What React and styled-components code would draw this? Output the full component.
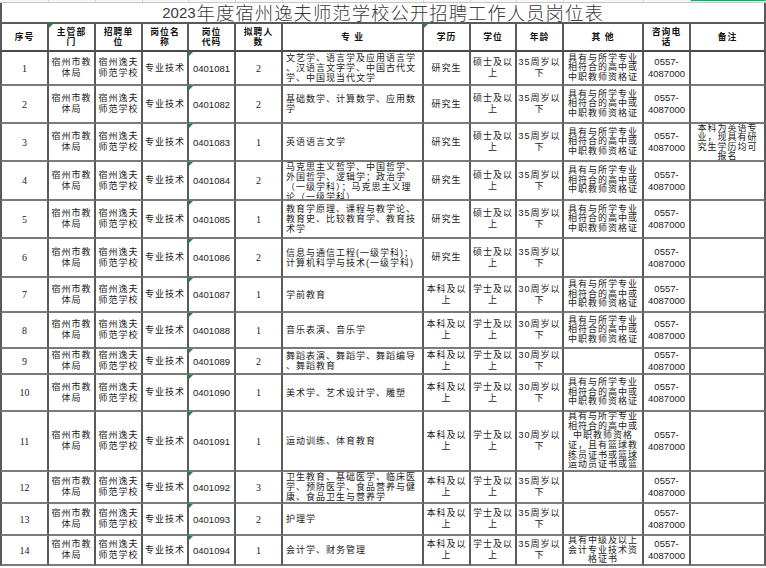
import React from 'react';
import styled, { createGlobalStyle } from 'styled-components';

const COLS = [49, 47, 47, 46, 47, 47, 141, 47, 46, 47, 80, 47, 75];
const ROW_H = [34, 38, 38, 39, 38, 39, 35, 36, 26, 37, 60, 32, 32, 30];
const colTemplate = COLS.map((c) => `${c}px`).join(' ');

const Global = createGlobalStyle`
  html, body { margin: 0; padding: 0; background: #fff; }
  body {
    width: 766px; height: 568px; overflow: hidden;
    font-family: "Liberation Sans", "Noto Sans CJK SC", sans-serif;
    color: #222;
  }
`;

const Page = styled.div`
  width: 766px;
  height: 568px;
  overflow: hidden;
  background: #fff;
  display: flex;
  flex-direction: column;
`;

const Ruler = styled.div`
  display: grid;
  grid-template-columns: ${colTemplate};
  height: 3px;
  box-sizing: border-box;
  border-bottom: 1px solid #c8c8c8;
  width: 766px;
  flex: none;
`;

const RulerCell = styled.div`
  box-sizing: border-box;
  border-right: 1px solid #d2d2d2;
  background: ${(p) => (p.$sel ? '#e6f2ea' : '#f7f7f7')};
  border-top: ${(p) => (p.$sel ? '1px solid #21a366' : 'none')};
`;

const Sheet = styled.div`
  display: grid;
  grid-template-columns: ${colTemplate};
  grid-template-rows: 21px 28px ${ROW_H.map((h) => `${h}px`).join(' ')};
  width: 766px;
  flex: none;
`;

const TitleCell = styled.div`
  grid-column: 1 / -1;
  box-sizing: border-box;
  border-left: 2px solid #5a5a5a;
  border-right: 2px solid #5a5a5a;
  border-bottom: 2px solid #5a5a5a;
  display: flex;
  align-items: center;
  justify-content: center;
  font-family: "Noto Sans CJK SC", sans-serif;
  font-weight: 300;
  font-size: 18.4px;
  letter-spacing: 1px;
  line-height: 1;
  color: #3a3a3a;
  white-space: nowrap;
`;

const TitleDigits = styled.span`
  font-family: "Liberation Sans", sans-serif;
  font-size: 15px;
  letter-spacing: 0;
  margin-right: 1px;
`;

const Cell = styled.div`
  box-sizing: border-box;
  position: relative;
  border-right: 2px solid #5a5a5a;
  border-bottom: 2px solid ${(p) => (p.$head ? '#4a4a4a' : '#7a7a7a')};
  border-left: ${(p) => (p.$first ? '2px solid #5a5a5a' : 'none')};
  display: flex;
  flex-direction: column;
  justify-content: safe center;
  align-items: ${(p) => (p.$left ? 'flex-start' : 'center')};
  text-align: ${(p) => (p.$left ? 'left' : 'center')};
  padding: 0 ${(p) => (p.$left ? '3px' : '0')};
  overflow: hidden;
  font-size: ${(p) => p.$size || 9}px;
  letter-spacing: ${(p) => (p.$tight ? 0 : 1)}px;
  line-height: ${(p) => p.$lh || 11}px;
  font-weight: ${(p) => (p.$head ? 700 : 400)};
  font-family: ${(p) =>
    p.$serif
      ? '"Liberation Serif", "Noto Sans CJK SC", serif'
      : '"Liberation Sans", "Noto Sans CJK SC", sans-serif'};
  color: ${(p) => (p.$head ? '#111' : '#1a1a1a')};
`;

const Line = styled.span`
  display: block;
  white-space: nowrap;
`;

const Flag = styled.span`
  position: absolute;
  top: 0;
  left: 0;
  width: 0;
  height: 0;
  border-top: 4px solid #1e8a3c;
  border-right: 4px solid transparent;
`;

const Lines = ({ lines }) => (lines || []).map((l, i) => <Line key={i}>{l}</Line>);

const OTHER = ['具有与所学专业', '相符合的高中或', '中职教师资格证'];
const PG = { edu: ['研究生'], deg: ['硕士及以', '上'] };
const UG = { edu: ['本科及以', '上'], deg: ['学士及以', '上'] };
const A35 = ['35周岁以', '下'];
const A30 = ['30周岁以', '下'];

const rows = [
  { n: 1, code: '0401081', cnt: 2, major: ['文艺学、语言学及应用语言学', '、汉语言文字学、中国古代文', '学、中国现当代文学'], ...PG, age: A35, other: OTHER },
  { n: 2, code: '0401082', cnt: 2, major: ['基础数学、计算数学、应用数', '学'], ...PG, age: A35, other: OTHER },
  { n: 3, code: '0401083', cnt: 1, major: ['英语语言文学'], ...PG, age: A35, other: OTHER, note: ['本科为英语专', '业，现具有研', '究生学历均可', '报名'] },
  { n: 4, code: '0401084', cnt: 2, major: ['马克思主义哲学、中国哲学、', '外国哲学、逻辑学；政治学', '（一级学科）；马克思主义理', '论（一级学科）'], ...PG, age: A35, other: OTHER },
  { n: 5, code: '0401085', cnt: 1, major: ['教育学原理、课程与教学论、', '教育史、比较教育学、教育技', '术学'], ...PG, age: A35, other: OTHER },
  { n: 6, code: '0401086', cnt: 2, major: ['信息与通信工程(一级学科)；', '计算机科学与技术(一级学科)'], ...PG, age: A35, other: null },
  { n: 7, code: '0401087', cnt: 1, major: ['学前教育'], ...UG, age: A30, other: OTHER },
  { n: 8, code: '0401088', cnt: 1, major: ['音乐表演、音乐学'], ...UG, age: A30, other: OTHER },
  { n: 9, code: '0401089', cnt: 2, major: ['舞蹈表演、舞蹈学、舞蹈编导', '、舞蹈教育'], ...UG, age: A30, other: null },
  { n: 10, code: '0401090', cnt: 1, major: ['美术学、艺术设计学、雕塑'], ...UG, age: A30, other: OTHER },
  { n: 11, code: '0401091', cnt: 1, major: ['运动训练、体育教育'], ...UG, age: A30, other: ['具有与所学专业', '相符合的高中或', '中职教师资格', '证，且有篮球教', '练员证书或篮球', '运动员证书或篮'] },
  { n: 12, code: '0401092', cnt: 3, major: ['卫生教育、基础医学、临床医', '学、预防医学、食品营养与健', '康、食品卫生与营养学'], ...UG, age: A35, other: null },
  { n: 13, code: '0401093', cnt: 2, major: ['护理学'], ...UG, age: A35, other: null },
  { n: 14, code: '0401094', cnt: 1, major: ['会计学、财务管理'], ...UG, age: A35, other: ['具有中级及以上', '会计专业技术资', '格证书'] },
];

const headers = [
  { lines: ['序号'] },
  { lines: ['主管部', '门'], flag: true },
  { lines: ['招聘单', '位'] },
  { lines: ['岗位名', '称'] },
  { lines: ['岗位', '代码'] },
  { lines: ['拟聘人', '数'] },
  { lines: ['专 业'] },
  { lines: ['学历'], flag: true },
  { lines: ['学位'] },
  { lines: ['年龄'] },
  { lines: ['其 他'] },
  { lines: ['咨询电', '话'] },
  { lines: ['备注'] },
];

export default function App() {
  return (
    <Page>
      <Global />
      <Ruler>
        {COLS.map((c, i) => (
          <RulerCell key={i} $sel={i === COLS.length - 1} />
        ))}
      </Ruler>
      <Sheet>
        <TitleCell>
          <TitleDigits>2023</TitleDigits>年度宿州逸夫师范学校公开招聘工作人员岗位表
        </TitleCell>
        {headers.map((h, i) => (
          <Cell key={`h${i}`} $head $first={i === 0} $size={8.8} $lh={10.5}>
            {h.flag && <Flag />}
            <Lines lines={h.lines} />
          </Cell>
        ))}
        {rows.map((r) => (
          <React.Fragment key={r.n}>
            <Cell $first $serif $tight $size={10}>{r.n}</Cell>
            <Cell $lh={11}><Lines lines={['宿州市教', '体局']} /></Cell>
            <Cell $lh={11}><Lines lines={['宿州逸夫', '师范学校']} /></Cell>
            <Cell>专业技术</Cell>
            <Cell $tight $size={9.5}>
              <Flag />
              {r.code}
            </Cell>
            <Cell $serif $tight $size={10}>{r.cnt}</Cell>
            <Cell $left $lh={10}><Lines lines={r.major} /></Cell>
            <Cell $lh={11}><Lines lines={r.edu} /></Cell>
            <Cell $lh={11}><Lines lines={r.deg} /></Cell>
            <Cell $lh={11}><Lines lines={r.age} /></Cell>
            <Cell $lh={9.6}><Lines lines={r.other} /></Cell>
            <Cell $tight $size={9.5} $lh={12}><Lines lines={['0557-', '4087000']} /></Cell>
            <Cell $lh={9.4}><Lines lines={r.note} /></Cell>
          </React.Fragment>
        ))}
      </Sheet>
    </Page>
  );
}
